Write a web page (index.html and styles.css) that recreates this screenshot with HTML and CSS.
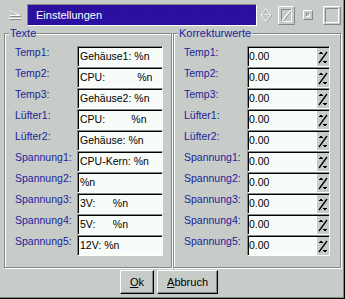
FILE: index.html
```html
<!DOCTYPE html>
<html lang="de">
<head>
    <meta charset="UTF-8">
    <meta name="viewport" content="width=device-width, initial-scale=1.0">
    <title>Einstellungen</title>
    <link rel="stylesheet" href="styles.css">
</head>
<body>
    <!-- Settings dialog -->
    <div class="window">
        <div class="titlebar">
            <svg class="ico-menu" viewBox="0 0 12 10">
                <path d="M1.5 1.5 L11.5 6.5 H1.5" fill="none" stroke="#848884"/>
                <path d="M0.5 0.5 L10.5 5.5 H0.5" fill="none" stroke="#fff"/>
                <path d="M0 8.5 H12" stroke="#fff"/>
                <path d="M1 9.5 H12" stroke="#848884"/>
            </svg>
            <div class="caption">Einstellungen</div>
            <svg class="ico-shade" viewBox="0 0 12 14">
                <path d="M6.5 1 L11.5 7.5 L6.5 14 L1.5 7.5 Z M1.5 7.5 H11.5" fill="none" stroke="#848884"/>
                <path d="M6 0.5 L11 7 L6 13.5 L1 7 Z M1 7 H11" fill="none" stroke="#fff"/>
            </svg>
            <svg class="ico-max" viewBox="0 0 17 19">
                <path d="M0.5 18.5 V0.5 H16.5" fill="none" stroke="#fff"/>
                <path d="M0.5 18.5 H16.5 V0.5" fill="none" stroke="#848884"/>
                <path d="M3.5 15.5 V3.5 H13.5" fill="none" stroke="#848884"/>
                <path d="M3.5 15.5 H13.5 V3.5" fill="none" stroke="#fff"/>
                <path d="M4 15 L13 4" stroke="#fff" stroke-width="1.2"/>
                <path d="M5 15.5 L13.5 5" stroke="#848884" stroke-width="1"/>
            </svg>
            <svg class="ico-min" viewBox="0 0 10 10">
                <path d="M0.5 9.5 V0.5 H9.5" fill="none" stroke="#fff"/>
                <path d="M0.5 9.5 H9.5 V0.5" fill="none" stroke="#848884"/>
                <path d="M3.5 6.5 V3.5 H6.5" fill="none" stroke="#848884"/>
                <path d="M3.5 6.5 H6.5 V3.5" fill="none" stroke="#fff"/>
            </svg>
            <svg class="ico-close" viewBox="0 0 18 19">
                <path d="M0.5 18.5 V0.5 H17.5" fill="none" stroke="#fff"/>
                <path d="M0.5 18.5 H17.5 V0.5" fill="none" stroke="#848884"/>
                <path d="M2.5 16.5 V2.5 H15.5" fill="none" stroke="#848884"/>
                <path d="M2.5 16.5 H15.5 V2.5" fill="none" stroke="#fff"/>
            </svg>
        </div>

        <div class="groups">
            <div class="group">
                <span class="group-title">Texte</span>
                <div class="rows">
                    <span class="lbl">Temp1:</span><div class="field">Gehäuse1: %n</div>
                    <span class="lbl">Temp2:</span><div class="field">CPU:           %n</div>
                    <span class="lbl">Temp3:</span><div class="field">Gehäuse2: %n</div>
                    <span class="lbl">Lüfter1:</span><div class="field">CPU:         %n</div>
                    <span class="lbl">Lüfter2:</span><div class="field">Gehäuse: %n</div>
                    <span class="lbl">Spannung1:</span><div class="field">CPU-Kern: %n</div>
                    <span class="lbl">Spannung2:</span><div class="field">%n</div>
                    <span class="lbl">Spannung3:</span><div class="field">3V:      %n</div>
                    <span class="lbl">Spannung4:</span><div class="field">5V:      %n</div>
                    <span class="lbl">Spannung5:</span><div class="field">12V: %n</div>
                </div>
            </div>

            <div class="group">
                <span class="group-title">Korrekturwerte</span>
                <div class="rows rows-num">
                    <span class="lbl">Temp1:</span><div class="field num"><span class="val">0.00</span><span class="spin"></span></div>
                    <span class="lbl">Temp2:</span><div class="field num"><span class="val">0.00</span><span class="spin"></span></div>
                    <span class="lbl">Temp3:</span><div class="field num"><span class="val">0.00</span><span class="spin"></span></div>
                    <span class="lbl">Lüfter1:</span><div class="field num"><span class="val">0.00</span><span class="spin"></span></div>
                    <span class="lbl">Lüfter2:</span><div class="field num"><span class="val">0.00</span><span class="spin"></span></div>
                    <span class="lbl">Spannung1:</span><div class="field num"><span class="val">0.00</span><span class="spin"></span></div>
                    <span class="lbl">Spannung2:</span><div class="field num"><span class="val">0.00</span><span class="spin"></span></div>
                    <span class="lbl">Spannung3:</span><div class="field num"><span class="val">0.00</span><span class="spin"></span></div>
                    <span class="lbl">Spannung4:</span><div class="field num"><span class="val">0.00</span><span class="spin"></span></div>
                    <span class="lbl">Spannung5:</span><div class="field num"><span class="val">0.00</span><span class="spin"></span></div>
                </div>
            </div>
        </div>

        <div class="actions">
            <button class="btn"><u>O</u>k</button>
            <button class="btn"><u>A</u>bbruch</button>
        </div>
    </div>
</body>
</html>
```

FILE: styles.css
```css
/* Old-style settings dialog */
body {
    margin: 0;
    background: #c8ccc8;
    font-family: "Liberation Sans", Arial, sans-serif;
    font-size: 10.5px;
}

.window {
    height: 299px;
    box-sizing: border-box;
    padding-top: 4px;
    box-shadow: inset -1px -1px 0 #000, inset -2px -2px 0 #848884;
}

/* Title bar */
.titlebar {
    display: flex;
    align-items: center;
    height: 22px;
    padding-left: 9px;
}

.titlebar svg {
    display: block;
    flex: none;
}

.ico-menu {
    width: 12px;
    height: 10px;
    margin-right: 6px;
}

.caption {
    width: 230px;
    height: 22px;
    box-sizing: border-box;
    border: 1px solid;
    border-color: #848884 #fff #fff #848884;
    background-color: #2c10a4;
    background-image: radial-gradient(circle, #220a88 0.7px, transparent 0.9px);
    background-size: 3px 3px;
    color: #fff;
    padding-left: 8px;
    line-height: 20px;
    font-size: 11px;
}

.ico-shade {
    width: 12px;
    height: 14px;
    margin-left: 3px;
}

.ico-max {
    width: 17px;
    height: 19px;
    margin-left: 6px;
}

.ico-min {
    width: 10px;
    height: 10px;
    margin-left: 8px;
}

.ico-close {
    width: 18px;
    height: 19px;
    margin-left: 10px;
}

/* Group boxes */
.groups {
    display: grid;
    grid-template-columns: 168px 168px;
    gap: 1px;
    margin: 7px 4px 0;
}

.group {
    display: flex;
    flex-direction: column;
    align-items: flex-start;
    border: 1px solid #848884;
    box-shadow: inset 1px 1px 0 #fff, 1px 1px 0 #fff;
    padding-bottom: 11px;
}

.group-title {
    margin: -7px 0 0 4px;
    padding: 0 1px;
    background: #c8ccc8;
    color: #1c1c9c;
    line-height: 13px;
    font-size: 11px;
}

.rows {
    display: grid;
    grid-template-columns: 62px 86px;
    grid-auto-rows: 21px;
    margin: 6px 0 0 10px;
}

.rows-num {
    grid-template-columns: 63px 83px;
}

.lbl {
    color: #1c1c9c;
    line-height: 13px;
    white-space: nowrap;
}

.field {
    box-sizing: border-box;
    height: 21px;
    border: 1px solid;
    border-color: #848884 #fff #fff #848884;
    box-shadow: inset 1px 1px 0 #000;
    background: #f8fcf8;
    padding: 3px 0 0 2px;
    line-height: 13px;
    white-space: pre;
    overflow: hidden;
}

.field.num {
    display: flex;
    padding: 1px 0 0 1px;
}

.val {
    flex: 1;
    padding-top: 2px;
}

.spin {
    width: 12px;
    margin-bottom: 0;
    border-left: 1px solid #fff;
    background-color: #c8ccc8;
    background-image: url("data:image/svg+xml,%3Csvg xmlns='http://www.w3.org/2000/svg' width='12' height='18'%3E%3Cpath d='M2 15 L10 4' stroke='%23000' stroke-width='1.3'/%3E%3Cpath d='M2 5.5 H6 M3 4.5 H5' stroke='%23000'/%3E%3Cpath d='M6 13.5 H10 M7 14.5 H9' stroke='%23000'/%3E%3C/svg%3E");
    background-repeat: no-repeat;
    background-position: center;
}

/* Buttons */
.actions {
    display: flex;
    justify-content: center;
    gap: 3px;
    margin-top: 2px;
    padding-right: 7px;
}

.btn {
    height: 24px;
    padding: 0 9px;
    font-family: inherit;
    font-size: 11px;
    color: #000;
    background: #c8ccc8;
    border: 1px solid;
    border-color: #fff #000 #000 #fff;
    box-shadow: inset -1px -1px 0 #848884;
    border-radius: 0;
}
```
